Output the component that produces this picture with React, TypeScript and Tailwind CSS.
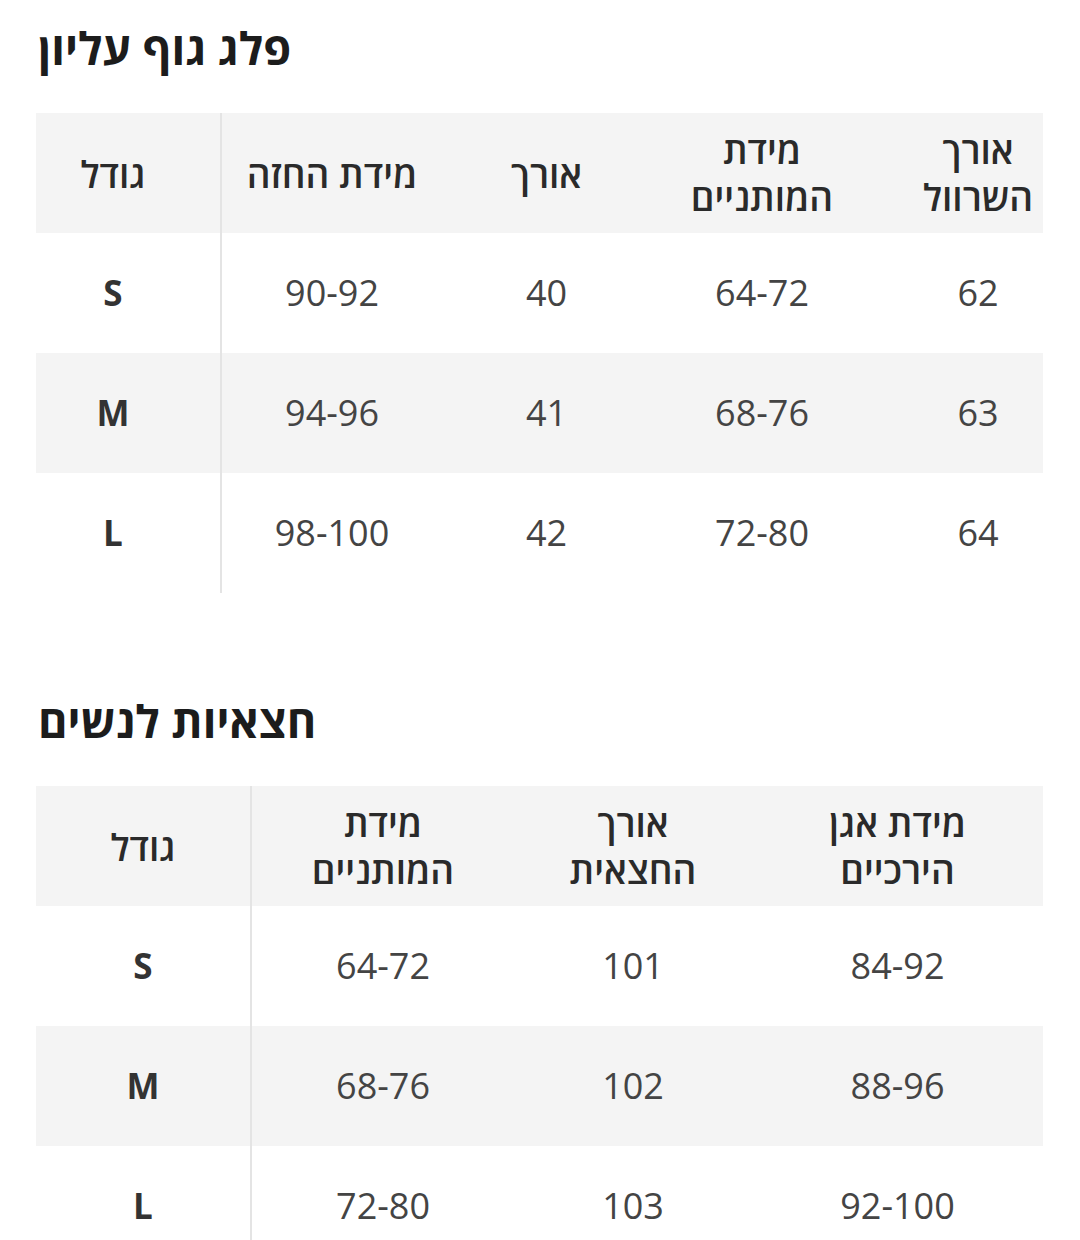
import React from "react";

type Cell = string | string[];

interface SizeTable {
    title: string;
    cols: string;
    pads: string[];
    head: Cell[];
    rows: string[][];
}

const tables: SizeTable[] = [
    {
        title: "פלג גוף עליון",
        cols: "grid-cols-[186px_220px_209px_222px_170px]",
        pads: ["pr-[30px]", "", "", "", "pl-[40px]"],
        head: ["גודל", "מידת החזה", "אורך", ["מידת", "המותניים"], ["אורך", "השרוול"]],
        rows: [
            ["S", "90-92", "40", "64-72", "62"],
            ["M", "94-96", "41", "68-76", "63"],
            ["L", "98-100", "42", "72-80", "64"],
        ],
    },
    {
        title: "חצאיות לנשים",
        cols: "grid-cols-[216px_262px_238px_291px]",
        pads: ["", "", "", ""],
        head: ["גודל", ["מידת", "המותניים"], ["אורך", "החצאית"], ["מידת אגן", "הירכיים"]],
        rows: [
            ["S", "64-72", "101", "84-92"],
            ["M", "68-76", "102", "88-96"],
            ["L", "72-80", "103", "92-100"],
        ],
    },
];

function Row({ cells, cols, pads, gray, head }: { cells: Cell[]; cols: string; pads: string[]; gray: boolean; head?: boolean }) {
    return (
        <div className={`grid ${cols} h-[120px] ${gray ? "bg-[#f4f4f4]" : "bg-white"}`}>
            {cells.map((c, i) => (
                <div
                    key={i}
                    dir="rtl"
                    className={`flex flex-col items-center justify-center text-center ${pads[i]} ${i === 0 ? "border-[#e4e4e4]" : ""} ${
                        head
                            ? "font-semibold text-[#2a2a2a] text-[37px] leading-[47px]"
                            : i === 0
                              ? "font-bold text-[#333] text-[35px]"
                              : "text-[36px] text-[#444]"
                    }`}
                    style={{ borderLeftWidth: 0, borderRightWidth: i === 0 ? 2 : 0 }}
                >
                    {Array.isArray(c) ? c.map((line) => <span key={line}>{line}</span>) : <span>{c}</span>}
                </div>
            ))}
        </div>
    );
}

export default function App() {
    return (
        <div className="w-[1080px] bg-white font-['Open_Sans',sans-serif] pl-[36px] pt-[18px]">
            {tables.map((t, ti) => (
                <section key={t.title} className={ti === 0 ? "" : "mt-[98px]"}>
                    <h2 className="text-left text-[45px] font-bold text-[#1c1c1c] leading-[60px] pl-[2px]">
                        <span dir="rtl">{t.title}</span>
                    </h2>
                    <div className="w-[1007px] mt-[35px]">
                        <Row cells={t.head} cols={t.cols} pads={t.pads} gray head />
                        {t.rows.map((r, ri) => (
                            <Row key={r[0]} cells={r} cols={t.cols} pads={t.pads} gray={ri === 1} />
                        ))}
                    </div>
                </section>
            ))}
        </div>
    );
}
